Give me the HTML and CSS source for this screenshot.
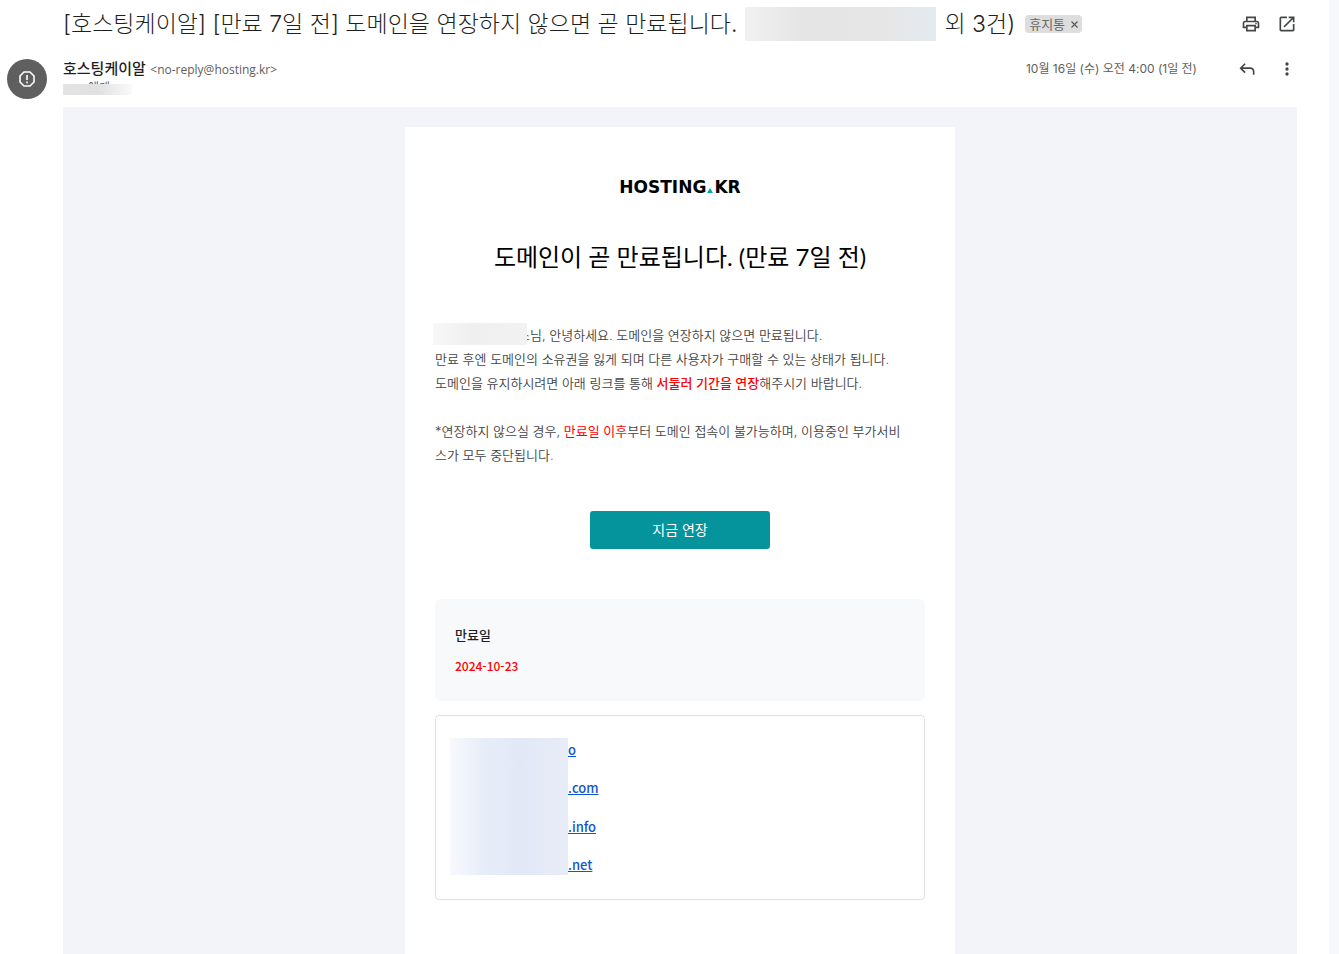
FILE: index.html
```
<!DOCTYPE html>
<html lang="ko">
<head>
    <meta charset="UTF-8">
    <meta name="viewport" content="width=device-width, initial-scale=1">
    <title>도메인이 곧 만료됩니다</title>
    <link rel="stylesheet" href="styles.css">
</head>
<body>
    <main class="message">
        <header class="subject">
            <h1 class="subject__title">[호스팅케이알] [만료 7일 전] 도메인을 연장하지 않으면 곧 만료됩니다.</h1>
            <span class="mask mask--subject"></span>
            <span class="subject__title">외 3건)</span>
            <span class="label">휴지통 <button class="label__remove" type="button" aria-label="라벨 삭제"><svg width="7" height="7" viewBox="0 0 7 7"><path d="M0.5 0.5l6 6M6.5 0.5l-6 6" stroke="#555" stroke-width="1.1"/></svg></button></span>
            <div class="actions">
                <button class="icon" type="button" aria-label="인쇄">
                    <svg width="20" height="20" viewBox="0 0 24 24" fill="#444746"><path d="M19 8h-1V3H6v5H5c-1.66 0-3 1.34-3 3v6h4v4h12v-4h4v-6c0-1.66-1.34-3-3-3zM8 5h8v3H8V5zm8 14H8v-4h8v4zm4-4h-2v-2H6v2H4v-4c0-.55.45-1 1-1h14c.55 0 1 .45 1 1v4z"/><circle cx="18" cy="11.5" r="1"/></svg>
                </button>
                <button class="icon" type="button" aria-label="새 창에서 열기">
                    <svg width="20" height="20" viewBox="0 0 24 24" fill="#444746"><path d="M19 19H5V5h7V3H5c-1.11 0-2 .9-2 2v14c0 1.1.89 2 2 2h14c1.1 0 2-.9 2-2v-7h-2v7zM14 3v2h3.59l-9.83 9.83 1.41 1.41L19 6.41V10h2V3h-7z"/></svg>
                </button>
            </div>
        </header>

        <section class="sender">
            <div class="avatar">
                <svg width="18" height="18" viewBox="0 0 18 18" fill="none" stroke="#fff" stroke-width="1.6"><path d="M6 2h6l4 4v6l-4 4H6l-4-4V6z"/><path d="M9 5v5M9 11.5v1.8"/></svg>
            </div>
            <div class="sender__info">
                <div class="sender__line"><strong class="sender__name">호스팅케이알</strong> <span class="sender__email">&lt;no-reply@hosting.kr&gt;</span></div>
                <div class="recipient"><span class="mask mask--recipient"></span>에게</div>
            </div>
            <time class="sender__date" datetime="2024-10-16T04:00">10월 16일 (수) 오전 4:00 (1일 전)</time>
            <div class="actions">
                <button class="icon" type="button" aria-label="답장">
                    <svg width="20" height="20" viewBox="0 0 24 24" fill="#444746"><path d="M6.83 10L10.41 6.41 9 5l-6 6 6 6 1.41-1.41L6.83 12H16c1.65 0 3 1.35 3 3v4h2v-4c0-2.76-2.24-5-5-5H6.83z"/></svg>
                </button>
                <button class="icon" type="button" aria-label="더보기">
                    <svg width="20" height="20" viewBox="0 0 24 24" fill="#444746"><circle cx="12" cy="6" r="2"/><circle cx="12" cy="12" r="2"/><circle cx="12" cy="18" r="2"/></svg>
                </button>
            </div>
        </section>

        <div class="mail">
            <article class="card">
                <div class="logo">HOSTING<svg class="logo__dot" width="6" height="5" viewBox="0 0 6 5"><path d="M3 0l3 5H0z" fill="#00a9a5"/></svg>KR</div>
                <h2 class="card__title">도메인이 곧 만료됩니다. (만료 7일 전)</h2>
                <p class="text"><span class="mask mask--name"></span>스님, 안녕하세요. 도메인을 연장하지 않으면 만료됩니다.<br>
                    만료 후엔 도메인의 소유권을 잃게 되며 다른 사용자가 구매할 수 있는 상태가 됩니다.<br>
                    도메인을 유지하시려면 아래 링크를 통해 <strong class="text__alert">서둘러 기간을 연장</strong>해주시기 바랍니다.</p>
                <p class="text">*연장하지 않으실 경우, <span class="text__alert">만료일 이후</span>부터 도메인 접속이 불가능하며, 이용중인 부가서비<br>스가 모두 중단됩니다.</p>
                <button class="renew" type="button">지금 연장</button>
                <dl class="expiry">
                    <dt>만료일</dt>
                    <dd>2024-10-23</dd>
                </dl>
                <div class="domains">
                    <span class="mask mask--domains"></span>
                    <ul class="domains__list">
                        <li><a href="#">o</a></li>
                        <li><a href="#">.com</a></li>
                        <li><a href="#">.info</a></li>
                        <li><a href="#">.net</a></li>
                    </ul>
                </div>
            </article>
        </div>
    </main>
</body>
</html>
```

FILE: styles.css
```
* {
    box-sizing: border-box;
}
html, body {
    margin: 0;
    padding: 0;
}
body {
    min-height: 100vh;
    padding-right: 10px;
    display: flex;
    background: #f6f8fc;
    color: #1f1f1f;
    font-family: "Noto Sans CJK KR", "Noto Sans", sans-serif;
}
button {
    padding: 0;
    border: none;
    background: none;
    font-family: inherit;
    cursor: pointer;
}
svg {
    display: block;
}
.message {
    flex: 1;
    display: flex;
    flex-direction: column;
    padding-right: 32px;
    background: #fff;
}

/* subject line */
.subject {
    display: flex;
    align-items: center;
    height: 48px;
    padding-left: 63px;
}
.subject__title {
    margin: 0;
    font-family: Inter, "Noto Sans CJK KR", sans-serif;
    font-size: 23px;
    font-weight: 300;
    line-height: 46px;
    white-space: nowrap;
}
.label {
    display: flex;
    align-items: center;
    gap: 6px;
    height: 18px;
    margin-left: 10px;
    padding: 0 4px;
    border-radius: 4px;
    background: #ddd;
    color: #666;
    font-size: 13px;
    line-height: 16px;
    white-space: nowrap;
}
.actions {
    display: flex;
    gap: 16px;
    margin-left: auto;
}
.icon {
    display: flex;
    align-items: center;
    justify-content: center;
    width: 20px;
    height: 20px;
}

/* blurred private data */
.mask {
    flex: none;
    display: inline-block;
}
.mask--subject {
    width: 191px;
    height: 34px;
    margin: 0 8px;
    background: linear-gradient(90deg, #f1f1f1, #e5e5e5 30%, #e6e6e6 75%, #e4eaf0);
}
.mask--recipient {
    z-index: 1;
    width: 69px;
    height: 11px;
    margin: 5px -44px 0 0;
    background: linear-gradient(90deg, #e4e4e4, #e0e0e0 50%, #fafafa);
}
.mask--name {
    position: relative;
    width: 94px;
    height: 22px;
    margin: 0 -9px 0 -2px;
    vertical-align: top;
    background: linear-gradient(90deg, #f8f8f8, #efefef 40%, #f2f2f2);
}
.mask--domains {
    width: 118px;
    height: 137px;
    background: linear-gradient(90deg, #f8f9fd, #e6ecf8 30%, #e2e8f6 60%, #e8ecf7);
}

/* sender row */
.sender {
    display: flex;
    height: 59px;
    padding: 11px 0 0 7px;
}
.avatar {
    display: flex;
    align-items: center;
    justify-content: center;
    width: 40px;
    height: 40px;
    margin-right: 16px;
    border-radius: 50%;
    background: #5f5f5f;
}
.sender__line {
    height: 20px;
    line-height: 16px;
}
.sender__name {
    font-size: 15px;
    font-weight: 500;
}
.sender__email,
.sender__date {
    color: #5e5e5e;
    font-family: Inter, "Noto Sans CJK KR", sans-serif;
    font-size: 12px;
}
.sender__email {
    font-family: "Open Sans", sans-serif;
}
.recipient {
    display: flex;
    height: 16px;
    color: #5e5e5e;
    font-size: 12px;
    line-height: 16px;
}
.sender__date {
    margin-left: auto;
    line-height: 20px;
}
.sender .actions {
    gap: 20px;
    margin-left: 40px;
}

/* mail body */
.mail {
    flex: 1;
    margin-left: 63px;
    padding-top: 20px;
    background: #f3f4f9;
}
.card {
    display: flex;
    flex-direction: column;
    max-width: 550px;
    min-height: 100%;
    margin: 0 auto;
    padding: 48px 30px;
    background: #fff;
}
.logo {
    display: flex;
    align-items: baseline;
    justify-content: center;
    gap: 1px;
    color: #000;
    font-family: "DejaVu Sans", sans-serif;
    font-size: 17px;
    font-weight: 700;
    line-height: 24px;
}
.card__title {
    margin: 40px 0 48px;
    color: #000;
    font-family: Lato, "Noto Sans CJK KR", sans-serif;
    font-size: 24px;
    font-weight: 400;
    line-height: 36px;
    text-align: center;
}
.text {
    margin: 0 0 24px;
    color: #444;
    font-family: Inter, "Noto Sans CJK KR", sans-serif;
    font-size: 13px;
    font-weight: 350;
    line-height: 24px;
    word-break: break-all;
}
.text__alert {
    color: #f00;
    font-weight: 400;
}
strong.text__alert {
    font-weight: 500;
}
.renew {
    align-self: center;
    width: 180px;
    height: 38px;
    margin: 20px 0 50px;
    padding-bottom: 2px;
    border-radius: 3px;
    background: #05939c;
    color: #fff;
    font-size: 14px;
}
.expiry {
    margin: 0 0 14px;
    padding: 20px;
    border-radius: 6px;
    background: #f8f9fb;
    font-size: 13px;
    font-weight: 500;
    line-height: 31px;
}
.expiry dd {
    margin: 0;
    color: #f00;
    font-size: 12px;
}
.domains {
    display: flex;
    padding: 22px 14px 24px;
    border: 1px solid #dee0e4;
    border-radius: 4px;
}
.domains__list {
    display: flex;
    flex-direction: column;
    justify-content: space-between;
    margin: 0;
    padding: 2px 0 0;
    list-style: none;
    font-size: 13px;
    font-weight: 500;
    line-height: 20px;
}
.domains a {
    color: #15c;
}
```
